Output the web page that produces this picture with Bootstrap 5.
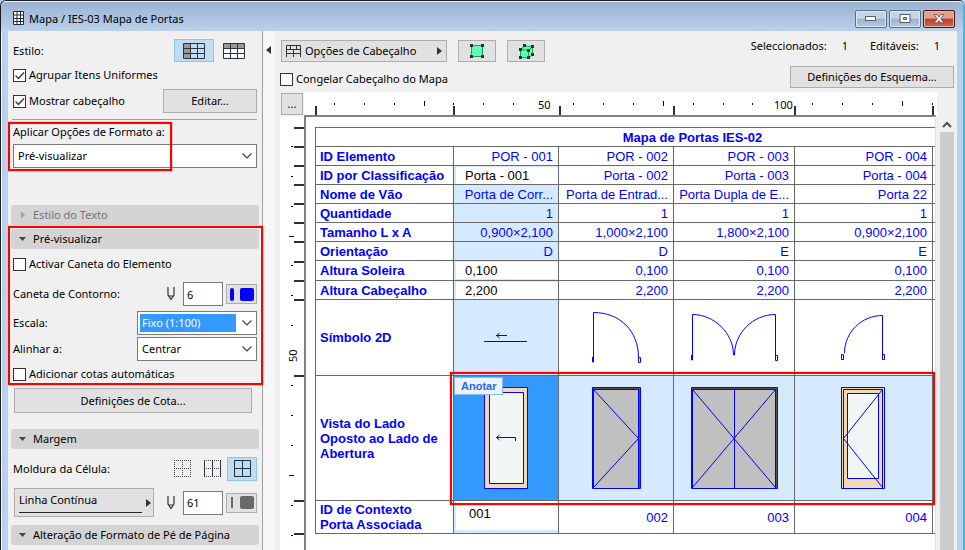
<!DOCTYPE html>
<html lang="pt">
<head>
<meta charset="utf-8">
<meta name="viewport" content="width=device-width, initial-scale=1">
<title>Mapa / IES-03 Mapa de Portas</title>
<link rel="stylesheet" href="https://cdn.jsdelivr.net/npm/bootstrap@5.3.0/dist/css/bootstrap.min.css">
<style>
body{font-family:"Noto Sans","Open Sans",sans-serif;font-size:11px;line-height:16px;color:#000;background:#bad1ea}
button,input,select{font:inherit;color:inherit}
svg{display:block;flex:none}
.win{min-height:100vh;height:100vh;border:1px solid #1c1c22;border-bottom:0;border-right:2px solid #2bc4e6;border-radius:6px 6px 0 0;background:#bad1ea;box-shadow:inset 1px 1px #eef4fb}
.titlebar{height:30px;padding:4px 8px 0 12px;background:linear-gradient(#9ab3d1,#bad1ea);border-radius:5px 5px 0 0;border-top:1px solid #e4edf7}
.titlebar h1{font-size:11px;line-height:16px;font-weight:400;margin:0}
.caps{gap:2px}
.cap{width:32px;height:18px;padding:0;border:1px solid #56708f;border-radius:2px;background:linear-gradient(#c4d5e8 45%,#9bb3cf 50%,#b4cae2);box-shadow:inset 0 0 0 1px #dce8f4}
.cap-x{border-color:#4b1520;background:linear-gradient(#e3a090 45%,#c0392a 50%,#cf6a52);box-shadow:inset 0 0 0 1px #e9b5a8}
.client{margin:0 6px 0 7px;background:#f0f0f0}
.side{flex:0 0 255px;border-right:1px solid #a0a0a0;padding-top:7px}
.split{flex:0 0 11px;background:#f7f7f7;padding:12px 0 0 3px}
.split button{border:0;background:none;padding:0}
.rowline{padding:0 5px}
.h24{height:24px}.h25{height:25px}.h26{height:26px}.h28{height:28px}.h30{height:30px}.h39{height:39px}
.tick{margin:0 3px 0 0;width:13px;height:13px;flex:none;appearance:none;border:1px solid #333;background:#fff center/11px no-repeat}
.tick:checked{background-image:url("data:image/svg+xml,%3Csvg xmlns='http://www.w3.org/2000/svg' viewBox='0 0 11 11'%3E%3Cpath d='M1.5 5.5l3 3 5.500-6' fill='none' stroke='%23333' stroke-width='1.300'/%3E%3C/svg%3E")}
.push{border:1px solid #adadad;background:#e1e1e1;padding:0;line-height:16px}
.tgl{border:1px solid transparent;background:none;padding:0;display:flex;align-items:center;justify-content:center}
.tgl.on{background:#bfdcf3;border-color:#90c4ee}
.wide{width:40px;height:23px}
.cell{width:30px;height:24px}
.rule{height:1px;background:#a0a0a0;margin:4px 5px 0 4px}
.pick{border:1px solid #7a7a7a;background:#fff;padding:2px 4px 2px 2px;height:24px}
.pick select{appearance:none;border:1px solid transparent;background:none;padding:0 1px;min-width:0;height:18px;line-height:16px;outline:0}
.pick.hot select{background:#39f;color:#fff;border:1px dotted #d07020}
.pick svg{margin-left:6px}
.half{width:120px}
.sec{width:calc(100% - 6px);margin:0 3px;height:20px;background:#d4d4d4;border:0;border-radius:3px;text-align:left;padding:0 0 0 7px;display:flex;align-items:center;gap:6px}
.sec.off{color:#757575;margin-top:37px}
.num{width:40px;height:24px;border:1px solid #7a7a7a;background:#fff;padding:0 3px;border-radius:0}
.pen{width:31px;height:20px;margin-left:3px}
.dim{width:238px;height:25px;margin:1px 0 16px 6px}
.linetype{width:140px;height:29px;padding:0 2px 0 4px;margin-left:1px}
.redbox{position:absolute;border:2px solid #f00;box-shadow:0 0 1px #f00;pointer-events:none;z-index:3}
.box-format{left:0;right:90px;top:2px;bottom:-3px}
.box-preview{left:0;right:-1px;top:-3px;bottom:2px}
.box-view{left:144px;right:0;top:255px;height:133px}
.main{min-width:0}
.tools{gap:11px;padding-top:9px;margin-left:-1px}
.tool{width:38px;height:22px}
.freeze{height:34px;margin-left:-2px}
.counts{padding-right:14px}
.lab{margin-right:15px}
.gapnum{margin-right:22px}
.sheet{display:grid;grid-template:24px minmax(0,1fr) / 24px minmax(0,1fr) 20px;margin-left:6px;margin-top:-4px}
.ruler{background:#fff;overflow:hidden}
.ruler text{font-size:11px}
.canvas{background:#fff;border-left:2px solid #808080;border-top:2px solid #808080;border-right:1px solid #e0e0e0;padding:10px 0 0 9px;overflow:hidden;margin:-1px 1px 0 0}
.vbar{margin-left:3px;width:14px;background:#f0f0f0}
.thumb{height:100%;background:#cdcdcd}
.grid{table-layout:fixed;width:755px;border-collapse:collapse;font-family:"Liberation Sans",Arial,sans-serif;font-size:13px;line-height:15px;color:#00f}
.grid th,.grid td{border:1px solid #696969;padding:0 5px 0 4px;height:19px;vertical-align:middle}
.grid .tall>*{height:20px}
.grid .last>*{height:33px}
.grid th{font-weight:700;text-align:left}
.grid td{text-align:right;white-space:nowrap;overflow:hidden}
.grid .pic{padding:0}
.grid .sel{background:#d6eaff}
.grid .cur{background:#39f}
.grid .edit{padding:0 0 0 2px;background:#d6eaff}
.edit input{display:block;width:100%;height:17px;border:0;padding:0 0 0 9px;background:#fff;color:#000;border-radius:0}
.edit .deep{height:29px;padding:0 0 5px 13px;margin-bottom:3px}
.note{left:0;top:1px;font-size:11px;line-height:16px;font-weight:700;color:#2a68e8;background:#eaf3fe;border:1px solid #8cb8ee;padding:0 6px}
</style>
<script src="https://cdn.jsdelivr.net/npm/bootstrap@5.3.0/dist/js/bootstrap.bundle.min.js"></script>
</head>
<body>
<div class="win d-flex flex-column overflow-hidden">
  <header class="titlebar d-flex align-items-center flex-shrink-0">
    <svg class="me-1" width="12" height="15" viewBox="0 0 12 15"><path d="M.5.5h10v13H.5z" fill="#fff"/><path d="M.5.5h10v13H.5zM4 .5v13M7.500.5v13M.5 4h10M.5 7.500h10M.5 10.500h10" fill="none" stroke="#222b33"/></svg>
    <h1 class="me-auto">Mapa / IES-03 Mapa de Portas</h1>
    <div class="caps d-flex">
      <button class="cap" aria-label="Minimizar"><svg class="mx-auto" width="12" height="6"><rect x=".5" y=".5" width="10" height="4" fill="#fff" stroke="#5a6470"/></svg></button>
      <button class="cap" aria-label="Maximizar"><svg class="mx-auto" width="12" height="10"><path d="M1 .5h10v8H1zM4.500 3.500h3v2h-3z" fill="#fff" fill-rule="evenodd" stroke="#4e5864"/></svg></button>
      <button class="cap cap-x" aria-label="Fechar"><svg class="mx-auto" width="12" height="10" viewBox="0 0 12 10"><path d="M1 .5h3l2 2.500 2-2.500h3L7.800 4.800 11 9H8L6 6.600 4 9H1l3.200-4.200z" fill="#fff" stroke="#5c4048" stroke-width=".8"/></svg></button>
    </div>
  </header>
  <div class="client d-flex flex-grow-1 overflow-hidden">
    <aside class="side">
      <div class="rowline h25 d-flex align-items-center pe-2">
        <span class="me-auto">Estilo:</span>
        <button class="tgl wide on" aria-label="Estilo com coluna"><svg width="22" height="16" viewBox="0 0 22 16"><path d="M.5.5h7v15h-7z" fill="#999"/><path d="M.5.5h21v15H.5zM.5 5.500h21M.5 10.500h21M7.500.5v15M14.500.5v15" fill="none" stroke="#2b353d"/></svg></button>
        <button class="tgl wide" aria-label="Estilo com linha"><svg width="22" height="16" viewBox="0 0 22 16"><path d="M.5.5h21v15H.5z" fill="#fff"/><path d="M.5.5h21v5H.5z" fill="#999"/><path d="M.5.5h21v15H.5zM.5 5.500h21M.5 10.500h21M7.500.5v15M14.500.5v15" fill="none" stroke="#2b353d"/></svg></button>
      </div>
      <div class="rowline h24 d-flex align-items-center"><input class="tick" type="checkbox" id="agr" checked><label for="agr">Agrupar Itens Uniformes</label></div>
      <div class="rowline h28 d-flex align-items-center"><input class="tick" type="checkbox" id="cab" checked><label class="me-auto" for="cab">Mostrar cabeçalho</label><button class="push" style="width:94px;height:24px">Editar...</button></div>
      <div class="rule"></div>
      <div class="position-relative">
        <div class="rowline h24 d-flex align-items-center"><label for="apl">Aplicar Opções de Formato a:</label></div>
        <div class="rowline"><div class="pick d-flex align-items-center"><select class="flex-grow-1" id="apl"><option>Pré-visualizar</option></select><svg width="10" height="6"><path d="M.5.5L5 5 9.500.5" fill="none" stroke="#444" stroke-width="1.200"/></svg></div></div>
        <div class="redbox box-format"></div>
      </div>
      <button class="sec off"><svg width="9" height="8"><path d="M3 0l4 4-4 4z" fill="#a0a0a0"/></svg>Estilo do Texto</button>
      <div class="position-relative mt-1">
        <button class="sec"><svg width="9" height="8"><path d="M1 2h7L4.500 6z" fill="#444"/></svg>Pré-visualizar</button>
        <div class="rowline h30 d-flex align-items-center"><input class="tick" type="checkbox" id="act"><label for="act">Activar Caneta do Elemento</label></div>
        <div class="rowline h30 d-flex align-items-center"><label class="me-auto" for="can">Caneta de Contorno:</label>
          <svg class="me-2" width="8" height="14" viewBox="0 0 8 14"><path d="M1 0v8l3 4.500L7 8V0M1.500 9h5" fill="none" stroke="#333" stroke-width="1.200"/></svg>
          <input class="num" id="can" type="text" value="6"><button class="push pen d-flex align-items-center justify-content-center" aria-label="Cor da caneta"><svg width="24" height="13"><rect width="4" height="13" rx="2" fill="#00f"/><rect x="10" width="14" height="13" rx="2" fill="#00f"/></svg></button></div>
        <div class="rowline h28 d-flex align-items-center"><label class="me-auto" for="esc">Escala:</label><div class="pick hot half d-flex align-items-center"><select class="flex-grow-1" id="esc"><option>Fixo (1:100)</option></select><svg width="10" height="6"><path d="M.5.5L5 5 9.500.5" fill="none" stroke="#444" stroke-width="1.200"/></svg></div></div>
        <div class="rowline h24 d-flex align-items-center"><label class="me-auto" for="ali">Alinhar a:</label><div class="pick half d-flex align-items-center"><select class="flex-grow-1" id="ali"><option>Centrar</option></select><svg width="10" height="6"><path d="M.5.5L5 5 9.500.5" fill="none" stroke="#444" stroke-width="1.200"/></svg></div></div>
        <div class="rowline h26 d-flex align-items-center"><input class="tick" type="checkbox" id="cot"><label for="cot">Adicionar cotas automáticas</label></div>
        <div class="redbox box-preview"></div>
      </div>
      <button class="push dim d-block">Definições de Cota...</button>
      <button class="sec"><svg width="9" height="8"><path d="M1 2h7L4.500 6z" fill="#444"/></svg>Margem</button>
      <div class="rowline h39 d-flex align-items-center"><span class="me-auto">Moldura da Célula:</span>
        <button class="tgl cell" aria-label="Sem moldura"><svg width="17" height="17"><path d="M0 .5h17M0 8.500h17M0 16.500h17M.5 0v17M8.500 0v17M16.500 0v17" fill="none" stroke="#444" stroke-dasharray="1 1"/></svg></button>
        <button class="tgl cell" aria-label="Moldura vertical"><svg width="17" height="17"><path d="M0 .5h17M0 8.500h17M0 16.500h17" fill="none" stroke="#444" stroke-dasharray="1 1"/><path d="M.5 0v17M8.500 0v17M16.500 0v17" stroke="#2b353d"/></svg></button>
        <button class="tgl cell on" aria-label="Moldura completa"><svg width="17" height="17"><path d="M.5.5h16v16H.5zM8.500.5v16M.5 8.500h16" fill="none" stroke="#20303c"/></svg></button>
      </div>
      <div class="rowline d-flex align-items-center mb-2">
        <button class="push linetype d-flex align-items-center text-start me-auto"><span class="flex-grow-1 border-bottom border-dark pb-1">Linha Contínua</span><svg class="ms-1" width="5" height="8"><path d="M0 0l5 4-5 4z" fill="#333"/></svg></button>
        <svg class="me-2" width="8" height="14" viewBox="0 0 8 14"><path d="M1 0v8l3 4.500L7 8V0M1.500 9h5" fill="none" stroke="#333" stroke-width="1.200"/></svg>
        <input class="num" type="text" value="61" aria-label="Caneta da margem"><button class="push pen d-flex align-items-center justify-content-center" aria-label="Cor da margem"><svg width="24" height="13"><rect x="1" y="1" width="2" height="11" fill="#696969"/><rect x="10" width="14" height="13" rx="2" fill="#696969"/></svg></button>
      </div>
      <button class="sec"><svg width="9" height="8"><path d="M1 2h7L4.500 6z" fill="#444"/></svg>Alteração de Formato de Pé de Página</button>
    </aside>
    <div class="split"><button aria-label="Recolher painel"><svg width="5" height="9"><path d="M5 0v8L0 4z" fill="#333"/></svg></button></div>
    <main class="main flex-grow-1 d-flex flex-column">
      <div class="d-flex justify-content-between ps-2 flex-shrink-0">
        <div>
          <div class="tools d-flex">
            <button class="push d-flex align-items-center" style="width:166px;height:22px;padding:0 4px"><svg class="me-1" width="15" height="12"><path d="M.5 12V.5h14V12M0 4.500h15M0 8.500h15M7.500 4.500V12M4.500.5v4M10.500.5v4" fill="none" stroke="#2b353d"/></svg><span class="me-auto">Opções de Cabeçalho</span><svg width="5" height="8"><path d="M0 0l5 4-5 4z" fill="#333"/></svg></button>
            <button class="push tool d-flex align-items-center justify-content-center" aria-label="Selecionar em planta"><svg width="14" height="14"><path d="M1.500 1.500h11v11h-11z" fill="#5dffb4" stroke="#12a15c"/><path d="M0 0h3v3H0zM11 0h3v3h-3zM0 11h3v3H0zM11 11h3v3h-3z" fill="#222f38"/></svg></button>
            <button class="push tool d-flex align-items-center justify-content-center" aria-label="Selecionar em 3D"><svg width="15" height="15"><path d="M1.500 5.500l4-3.500 8 .5V11l-4 3-8-.5z" fill="#5dffb4" stroke="#12a15c"/><path d="M1.500 5.500l8 .8 4-3.500M9.500 6.500v7" fill="none" stroke="#12a15c"/><path d="M0 4h3v3H0zM4 0h3v3H4zM12 1h3v3h-3zM8 5h3v3H8zM0 12h3v3H0zM8 12h3v3H8zM12 9h3v3h-3z" fill="#222f38"/></svg></button>
          </div>
          <div class="freeze d-flex align-items-center"><input class="tick" type="checkbox" id="cong"><label for="cong">Congelar Cabeçalho do Mapa</label></div>
        </div>
        <div class="d-flex flex-column align-items-end" style="padding:7px 3px 0 0">
          <div class="counts d-flex"><span class="lab">Seleccionados:</span><span class="gapnum">1</span><span class="lab">Editáveis:</span><span>1</span></div>
          <button class="push" style="width:164px;height:22px;margin-top:12px">Definições do Esquema...</button>
        </div>
      </div>
      <div class="sheet flex-grow-1">
        <button class="push" style="margin:1px">...</button>
        <div class="ruler"><svg width="640" height="24" viewBox="304 92 640 24">
          <path d="M316 106v10M454 106v10M560 106v10M674 106v10M795 106v10M933 106v10" stroke="#263238" stroke-width="2"/>
          <path d="M334.500 103v2M364.500 103v2M394.500 103v2M424.500 101v5M453.500 103v2M483.500 103v2M513.500 103v2M573.500 103v2M603.500 103v2M633.500 103v2M663.500 101v5M693.500 103v2M723.500 103v2M752.500 103v2M812.500 103v2M842.500 103v2M872.500 103v2M902.500 101v5M932.500 103v2" stroke="#000"/>
          <text x="538" y="109">50</text><text x="774" y="109">100</text></svg></div>
        <div></div>
        <div class="ruler"><svg width="24" height="434" viewBox="280 116 24 434">
          <path d="M294 128h10M294 147h10M294 166h10M294 185h10M294 204h10M294 223h10M294 242h10M294 262h10M294 281h10M294 300h10M294 376h10M294 501h10M294 534h10" stroke="#263238" stroke-width="2"/>
          <path d="M291 146.500h2M291 176.500h2M291 206.500h2M289 236.500h5M291 265.500h2M291 295.500h2M291 325.500h2M291 385.500h2M291 415.500h2M291 445.500h2M289 475.500h5M291 505.500h2M291 535.500h2" stroke="#000"/>
          <text transform="translate(297 362) rotate(-90)">50</text></svg></div>
        <div class="canvas position-relative">
          <table class="grid">
            <colgroup><col style="width:138px"><col style="width:105px"><col style="width:115px"><col style="width:121px"><col style="width:138px"><col style="width:138px"></colgroup>
            <tr><th colspan="6" class="text-center">Mapa de Portas IES-02</th></tr>
            <tr><th>ID Elemento</th><td>POR - 001</td><td>POR - 002</td><td>POR - 003</td><td>POR - 004</td><td></td></tr>
            <tr><th>ID por Classificação</th><td class="edit"><input type="text" value="Porta - 001" aria-label="ID por Classificação"></td><td>Porta - 002</td><td>Porta - 003</td><td>Porta - 004</td><td></td></tr>
            <tr><th>Nome de Vão</th><td class="sel">Porta de Corr...</td><td>Porta de Entrad...</td><td>Porta Dupla de E...</td><td>Porta 22</td><td></td></tr>
            <tr><th>Quantidade</th><td class="sel">1</td><td>1</td><td>1</td><td>1</td><td></td></tr>
            <tr><th>Tamanho L x A</th><td class="sel">0,900×2,100</td><td>1,000×2,100</td><td>1,800×2,100</td><td>0,900×2,100</td><td></td></tr>
            <tr><th>Orientação</th><td class="sel">D</td><td>D</td><td>E</td><td>E</td><td></td></tr>
            <tr class="tall"><th>Altura Soleira</th><td class="edit"><input type="text" value="0,100" aria-label="Altura Soleira"></td><td>0,100</td><td>0,100</td><td>0,100</td><td></td></tr>
            <tr><th>Altura Cabeçalho</th><td class="edit"><input type="text" value="2,200" aria-label="Altura Cabeçalho"></td><td>2,200</td><td>2,200</td><td>2,200</td><td></td></tr>
            <tr><th>Símbolo 2D</th>
              <td class="pic sel"><svg width="104" height="75" viewBox="454 300 104 75"><path d="M484 341.500h43M496 335.500h11M499.500 333l-3 2.500 3 2.500" fill="none" stroke="#00f"/></svg></td>
              <td class="pic"><svg width="114" height="75" viewBox="559 300 114 75" fill="none" stroke="#00f"><path d="M593.500 362V312.500C620 312.500 638.500 331 638.500 357.500h2v5h-2v-5M592.500 357v5h1"/></svg></td>
              <td class="pic"><svg width="120" height="75" viewBox="674 300 120 75" fill="none" stroke="#00f"><path d="M692.500 360V314.500C714 314.500 733.500 333 733.500 355h1C734.500 333 753 314.500 775.500 314.500V360.500M691.500 355v5h1M775.500 355.500h2v5h-2"/></svg></td>
              <td class="pic"><svg width="137" height="75" viewBox="795 300 137 75" fill="none" stroke="#00f"><path d="M882.500 359.500v-44C862 315.500 844.500 332 844.500 353M841.500 354.500h2v5h-2zM882.500 354.500h2v5h-2z"/></svg></td><td></td></tr>
            <tr><th>Vista do Lado Oposto ao Lado de Abertura</th>
              <td class="pic cur position-relative"><svg width="104" height="124" viewBox="454 376 104 124" fill="none" stroke="#00f"><path d="M484.500 387.500h43v101h-43z" fill="#f0d9b8"/><path d="M489.500 392.500h34v91h-34z" fill="#eff6f3"/><path d="M515.500 441v-3.500h-19M499.500 435l-3 2.500 3 2.500"/></svg><span class="note position-absolute">Anotar</span></td>
              <td class="pic sel"><svg width="114" height="124" viewBox="559 376 114 124" fill="none" stroke="#00f"><path d="M592.500 387.500h48v101h-48z" fill="#555"/><path d="M593.500 389.500h45v99h-45z" fill="#c0c0c0"/><path d="M593.500 389.500l45 49-45 49"/></svg></td>
              <td class="pic sel"><svg width="120" height="124" viewBox="674 376 120 124" fill="none" stroke="#00f"><path d="M691.500 387.500h86v101h-86z" fill="#555"/><path d="M692.500 389.500h83v99h-83z" fill="#c0c0c0"/><path d="M692.500 389.500l83 98M775.500 389.500l-83 98M734.500 389v99"/></svg></td>
              <td class="pic sel"><svg width="137" height="124" viewBox="795 376 137 124" fill="none" stroke="#00f"><path d="M841.500 387.500h43v101h-43z" fill="#f0d9b8"/><path d="M843.500 488v-98.500h39v98.500"/><path d="M847.500 393.500h31v85h-31z" fill="#eff6f3"/><path d="M882.500 389.500l-39 49 39 49"/></svg></td><td class="sel"></td></tr>
            <tr class="last"><th>ID de Contexto Porta Associada</th><td class="edit"><input class="deep" type="text" value="001" aria-label="ID de Contexto Porta Associada"></td><td>002</td><td>003</td><td>004</td><td></td></tr>
          </table>
          <div class="redbox box-view"></div>
        </div>
        <div class="vbar"><svg width="14" height="16"><path d="M3 11l4-4 4 4" fill="none" stroke="#505050" stroke-width="2"/></svg><div class="thumb"></div></div>
      </div>
    </main>
  </div>
</div>
</body>
</html>
